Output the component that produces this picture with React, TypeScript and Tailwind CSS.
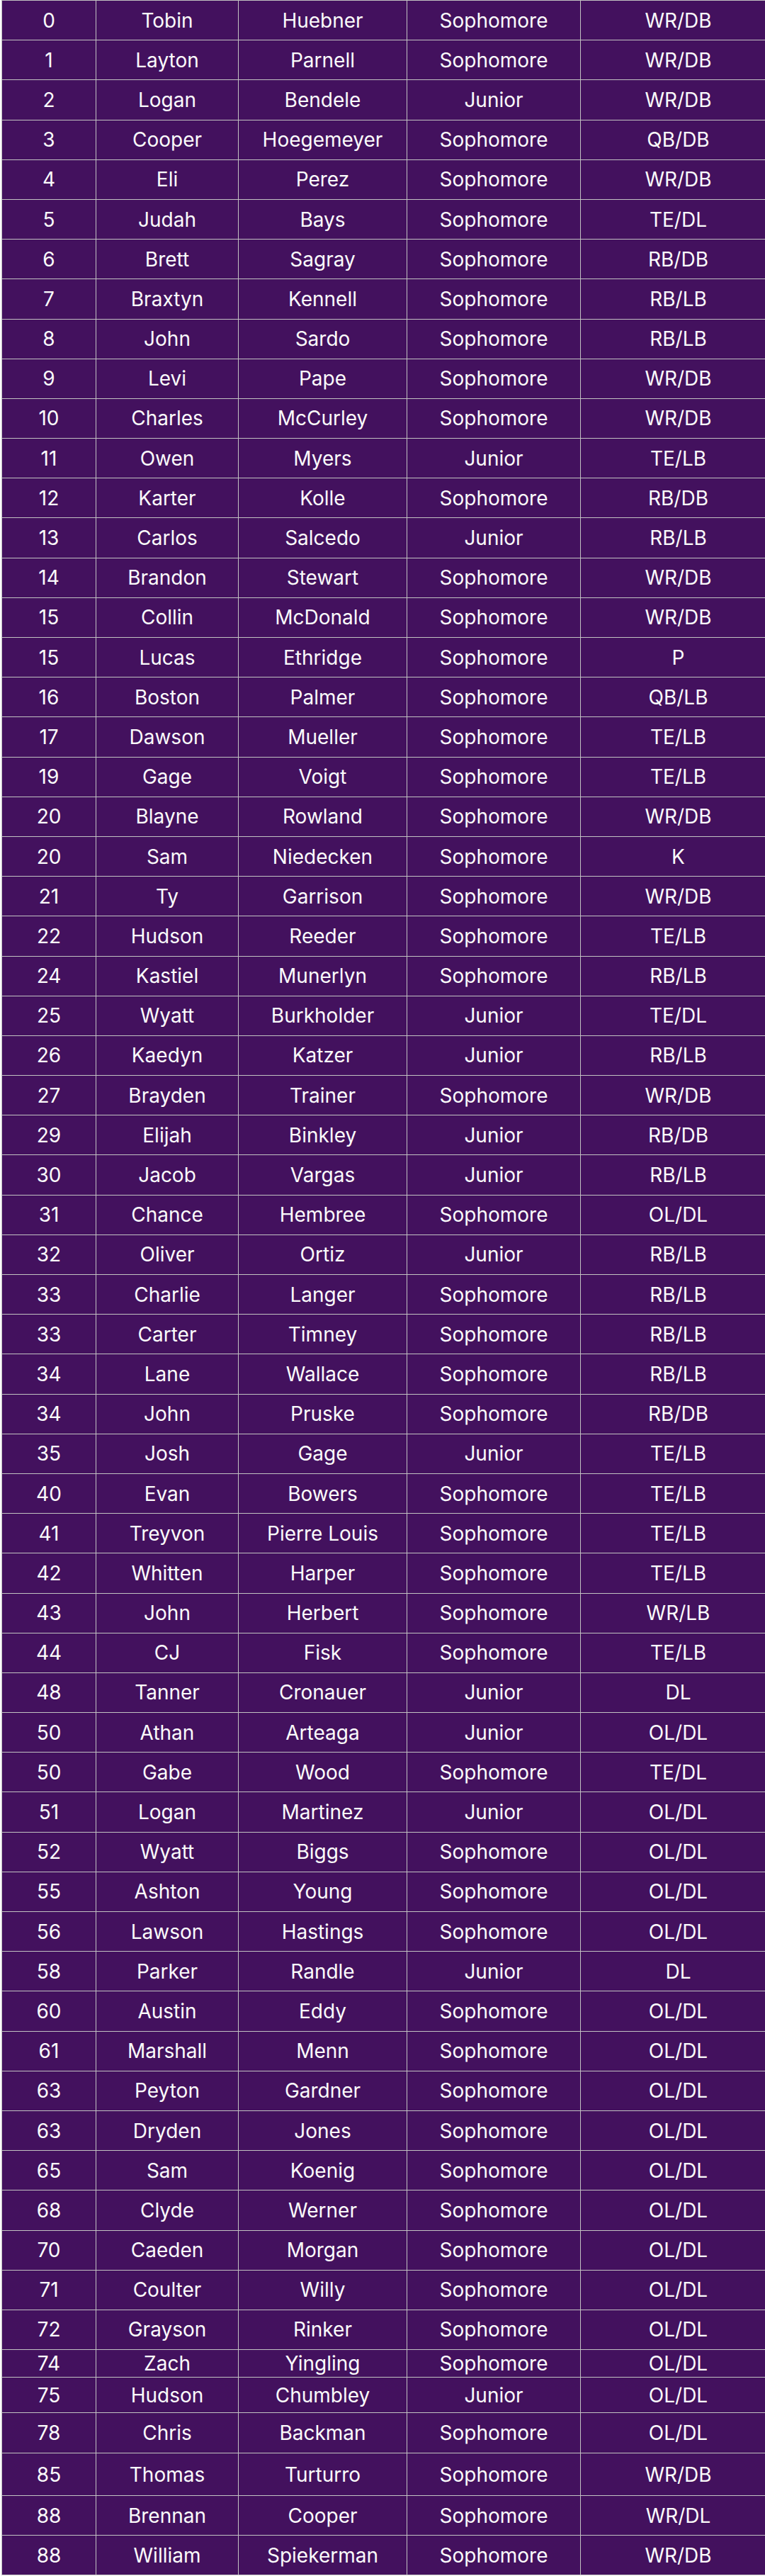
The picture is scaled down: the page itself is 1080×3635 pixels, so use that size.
import React from "react";

type Row = [string, string, string, string, string, string?];

const rows: Row[] = [
  ["0", "Tobin", "Huebner", "Sophomore", "WR/DB"],
  ["1", "Layton", "Parnell", "Sophomore", "WR/DB"],
  ["2", "Logan", "Bendele", "Junior", "WR/DB"],
  ["3", "Cooper", "Hoegemeyer", "Sophomore", "QB/DB"],
  ["4", "Eli", "Perez", "Sophomore", "WR/DB"],
  ["5", "Judah", "Bays", "Sophomore", "TE/DL"],
  ["6", "Brett", "Sagray", "Sophomore", "RB/DB"],
  ["7", "Braxtyn", "Kennell", "Sophomore", "RB/LB"],
  ["8", "John", "Sardo", "Sophomore", "RB/LB"],
  ["9", "Levi", "Pape", "Sophomore", "WR/DB"],
  ["10", "Charles", "McCurley", "Sophomore", "WR/DB"],
  ["11", "Owen", "Myers", "Junior", "TE/LB"],
  ["12", "Karter", "Kolle", "Sophomore", "RB/DB"],
  ["13", "Carlos", "Salcedo", "Junior", "RB/LB"],
  ["14", "Brandon", "Stewart", "Sophomore", "WR/DB"],
  ["15", "Collin", "McDonald", "Sophomore", "WR/DB"],
  ["15", "Lucas", "Ethridge", "Sophomore", "P"],
  ["16", "Boston", "Palmer", "Sophomore", "QB/LB"],
  ["17", "Dawson", "Mueller", "Sophomore", "TE/LB"],
  ["19", "Gage", "Voigt", "Sophomore", "TE/LB"],
  ["20", "Blayne", "Rowland", "Sophomore", "WR/DB"],
  ["20", "Sam", "Niedecken", "Sophomore", "K"],
  ["21", "Ty", "Garrison", "Sophomore", "WR/DB"],
  ["22", "Hudson", "Reeder", "Sophomore", "TE/LB"],
  ["24", "Kastiel", "Munerlyn", "Sophomore", "RB/LB"],
  ["25", "Wyatt", "Burkholder", "Junior", "TE/DL"],
  ["26", "Kaedyn", "Katzer", "Junior", "RB/LB"],
  ["27", "Brayden", "Trainer", "Sophomore", "WR/DB"],
  ["29", "Elijah", "Binkley", "Junior", "RB/DB"],
  ["30", "Jacob", "Vargas", "Junior", "RB/LB"],
  ["31", "Chance", "Hembree", "Sophomore", "OL/DL"],
  ["32", "Oliver", "Ortiz", "Junior", "RB/LB"],
  ["33", "Charlie", "Langer", "Sophomore", "RB/LB"],
  ["33", "Carter", "Timney", "Sophomore", "RB/LB"],
  ["34", "Lane", "Wallace", "Sophomore", "RB/LB"],
  ["34", "John", "Pruske", "Sophomore", "RB/DB"],
  ["35", "Josh", "Gage", "Junior", "TE/LB"],
  ["40", "Evan", "Bowers", "Sophomore", "TE/LB"],
  ["41", "Treyvon", "Pierre Louis", "Sophomore", "TE/LB"],
  ["42", "Whitten", "Harper", "Sophomore", "TE/LB"],
  ["43", "John", "Herbert", "Sophomore", "WR/LB"],
  ["44", "CJ", "Fisk", "Sophomore", "TE/LB"],
  ["48", "Tanner", "Cronauer", "Junior", "DL"],
  ["50", "Athan", "Arteaga", "Junior", "OL/DL"],
  ["50", "Gabe", "Wood", "Sophomore", "TE/DL"],
  ["51", "Logan", "Martinez", "Junior", "OL/DL"],
  ["52", "Wyatt", "Biggs", "Sophomore", "OL/DL"],
  ["55", "Ashton", "Young", "Sophomore", "OL/DL"],
  ["56", "Lawson", "Hastings", "Sophomore", "OL/DL"],
  ["58", "Parker", "Randle", "Junior", "DL"],
  ["60", "Austin", "Eddy", "Sophomore", "OL/DL"],
  ["61", "Marshall", "Menn", "Sophomore", "OL/DL"],
  ["63", "Peyton", "Gardner", "Sophomore", "OL/DL"],
  ["63", "Dryden", "Jones", "Sophomore", "OL/DL"],
  ["65", "Sam", "Koenig", "Sophomore", "OL/DL"],
  ["68", "Clyde", "Werner", "Sophomore", "OL/DL"],
  ["70", "Caeden", "Morgan", "Sophomore", "OL/DL"],
  ["71", "Coulter", "Willy", "Sophomore", "OL/DL"],
  ["72", "Grayson", "Rinker", "Sophomore", "OL/DL"],
  ["74", "Zach", "Yingling", "Sophomore", "OL/DL", "h-[39px]"],
  ["75", "Hudson", "Chumbley", "Junior", "OL/DL", "h-[50px]"],
  ["78", "Chris", "Backman", "Sophomore", "OL/DL", "h-[57px]"],
  ["85", "Thomas", "Turturro", "Sophomore", "WR/DB", "h-[60px]"],
  ["88", "Brennan", "Cooper", "Sophomore", "WR/DL", "h-[56px]"],
  ["88", "William", "Spiekerman", "Sophomore", "WR/DB", "h-[56px]"],
];

const cell = "flex items-center justify-center border-r border-[#c2c2c2] whitespace-nowrap";

export default function App() {
  return (
    <div className="w-[1080px] overflow-hidden bg-white">
      <div
        className="ml-[2px] w-[1095px] border-l border-t border-[#c2c2c2] bg-[#43115e] text-[28px] text-[#fbfbfb]"
        style={{ fontFamily: "Inter, 'Noto Sans', sans-serif" }}
      >
        {rows.map((r, i) => (
          <div key={i} className={`flex border-b border-[#c2c2c2] ${r[5] ?? "h-[56.2px]"}`}>
            <div className={`${cell} w-[133px]`}>{r[0]}</div>
            <div className={`${cell} w-[201px]`}>{r[1]}</div>
            <div className={`${cell} w-[238px]`}>{r[2]}</div>
            <div className={`${cell} w-[245px]`}>{r[3]}</div>
            <div className={`${cell} w-[276px]`}>{r[4]}</div>
          </div>
        ))}
      </div>
    </div>
  );
}
